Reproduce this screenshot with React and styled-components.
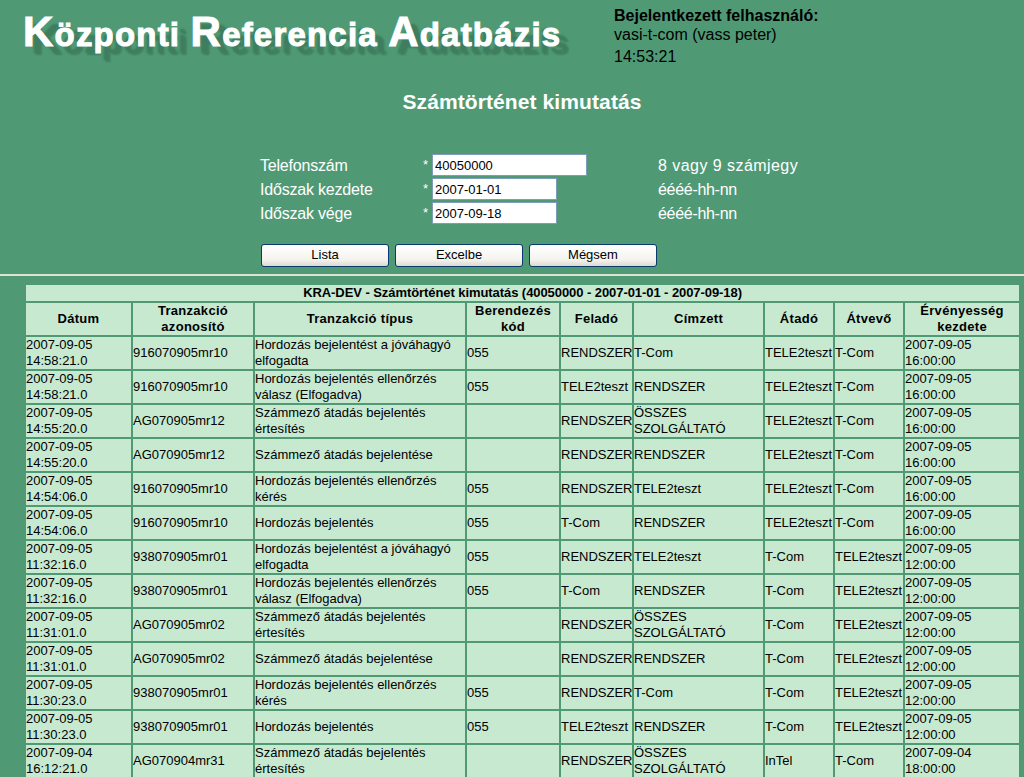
import React from "react";
import styled, { createGlobalStyle } from "styled-components";

const GlobalStyle = createGlobalStyle`
  html, body {
    margin: 0;
    padding: 0;
    height: 777px;
    overflow: hidden;
    background-color: #4f9a75;
    font-family: "Liberation Sans", Arial, sans-serif;
  }
`;

const Page = styled.div`
  width: 1024px;
  height: 777px;
  overflow: hidden;
`;

const Header = styled.div`
  display: flex;
  height: 70px;
`;

const LogoBox = styled.div`
  width: 614px;
  padding: 12px 0 0 23px;
  box-sizing: border-box;
`;

const Logo = styled.div`
  font-size: 33px;
  line-height: 40px;
  font-weight: bold;
  color: #fff;
  white-space: nowrap;
  letter-spacing: 1.2px;
  -webkit-text-stroke: 1px #fff;
  text-shadow: 8px 7px 2px #3f7d5f, 10px 9px 2px #41805f;

  span {
    font-size: 42px;
  }
`;

const UserInfo = styled.div`
  padding-top: 7px;
  font-size: 16px;
  line-height: 20px;
  color: #000;

  div {
    margin-bottom: 2px;
  }

  b {
    display: block;
    line-height: 18px;
  }
`;

const Title = styled.h1`
  margin: 20px 0 0;
  height: 63px;
  padding-left: 20px;
  font-size: 21px;
  line-height: 24px;
  font-weight: bold;
  letter-spacing: 0.1px;
  color: #fff;
  text-align: center;
`;

const Form = styled.div`
  display: grid;
  grid-template-columns: 163px 9px 226px auto;
  grid-auto-rows: 24px;
  margin-left: 260px;
  align-items: center;
  color: #fff;
  font-size: 16px;
`;

const Label = styled.span`
  padding-top: 1px;
  letter-spacing: -0.2px;
`;

const Star = styled.span`
  font-size: 13px;
  align-self: start;
  padding-top: 4px;
`;

const Hint = styled.span`
  padding-top: 1px;
  white-space: nowrap;
  letter-spacing: ${(p) => p.$track}px;
`;

const Input = styled.input`
  box-sizing: border-box;
  display: block;
  width: ${(p) => p.$width}px;
  height: 22px;
  margin: 0;
  padding: 1px 2px;
  border: 1px solid #7f9db9;
  border-radius: 0;
  outline: none;
  background: #fff;
  color: #000;
  font-family: "Liberation Sans", Arial, sans-serif;
  font-size: 13px;
`;

const Buttons = styled.div`
  display: flex;
  gap: 6px;
  margin: 19px 0 0 261px;
`;

const Button = styled.button`
  box-sizing: border-box;
  width: 128px;
  height: 23px;
  padding: 0 0 2px;
  border: 1px solid #0a3a6b;
  border-radius: 3px;
  background: linear-gradient(#ffffff, #f4f3ee 70%, #dcd9cf);
  color: #000;
  font-family: "Liberation Sans", Arial, sans-serif;
  font-size: 13px;
`;

const Rule = styled.hr`
  margin: 7px 0 0;
  height: 2px;
  border: 0;
  background: #dfe3d3;
`;

const TableWrap = styled.div`
  margin: 7px 0 0 24px;
`;

const Table = styled.table`
  table-layout: fixed;
  width: 997px;
  border-collapse: separate;
  border-spacing: 2px;
  color: #000;
  font-size: 13px;
  line-height: 16px;
`;

const Caption = styled.th`
  height: 16px;
  padding: 0;
  background: #c6e9d0;
  font-size: 13px;
  line-height: 16px;
  font-weight: bold;
  letter-spacing: -0.07px;
  text-align: center;
`;

const HeadCell = styled.th`
  height: 32px;
  padding: 0;
  background: #c6e9d0;
  font-weight: bold;
  letter-spacing: 0.3px;
  text-align: center;
  vertical-align: middle;
`;

const Cell = styled.td`
  height: 32px;
  padding: 0;
  background: #c6e9d0;
  text-align: left;
  vertical-align: middle;
  white-space: ${(p) => (p.$nowrap ? "nowrap" : "normal")};
  overflow: hidden;
`;

const COLS = [105, 120, 210, 92, 71, 129, 68, 68, 114];

const HEADS = [
  ["Dátum"],
  ["Tranzakció", "azonosító"],
  ["Tranzakció típus"],
  ["Berendezés", "kód"],
  ["Feladó"],
  ["Címzett"],
  ["Átadó"],
  ["Átvevő"],
  ["Érvényesség", "kezdete"],
];

const JOVA = ["Hordozás bejelentést a jóváhagyó", "elfogadta"];
const VALASZ = ["Hordozás bejelentés ellenőrzés", "válasz (Elfogadva)"];
const KERES = ["Hordozás bejelentés ellenőrzés", "kérés"];
const ATADAS = ["Számmező átadás bejelentés", "értesítés"];
const ALL = ["ÖSSZES", "SZOLGÁLTATÓ"];

const ROWS = [
  ["2007-09-05", "14:58:21.0", "916070905mr10", JOVA, "055", "RENDSZER", "T-Com", "TELE2teszt", "T-Com", "16:00:00", "2007-09-05"],
  ["2007-09-05", "14:58:21.0", "916070905mr10", VALASZ, "055", "TELE2teszt", "RENDSZER", "TELE2teszt", "T-Com", "16:00:00", "2007-09-05"],
  ["2007-09-05", "14:55:20.0", "AG070905mr12", ATADAS, "", "RENDSZER", ALL, "TELE2teszt", "T-Com", "16:00:00", "2007-09-05"],
  ["2007-09-05", "14:55:20.0", "AG070905mr12", ["Számmező átadás bejelentése"], "", "RENDSZER", "RENDSZER", "TELE2teszt", "T-Com", "16:00:00", "2007-09-05"],
  ["2007-09-05", "14:54:06.0", "916070905mr10", KERES, "055", "RENDSZER", "TELE2teszt", "TELE2teszt", "T-Com", "16:00:00", "2007-09-05"],
  ["2007-09-05", "14:54:06.0", "916070905mr10", ["Hordozás bejelentés"], "055", "T-Com", "RENDSZER", "TELE2teszt", "T-Com", "16:00:00", "2007-09-05"],
  ["2007-09-05", "11:32:16.0", "938070905mr01", JOVA, "055", "RENDSZER", "TELE2teszt", "T-Com", "TELE2teszt", "12:00:00", "2007-09-05"],
  ["2007-09-05", "11:32:16.0", "938070905mr01", VALASZ, "055", "T-Com", "RENDSZER", "T-Com", "TELE2teszt", "12:00:00", "2007-09-05"],
  ["2007-09-05", "11:31:01.0", "AG070905mr02", ATADAS, "", "RENDSZER", ALL, "T-Com", "TELE2teszt", "12:00:00", "2007-09-05"],
  ["2007-09-05", "11:31:01.0", "AG070905mr02", ["Számmező átadás bejelentése"], "", "RENDSZER", "RENDSZER", "T-Com", "TELE2teszt", "12:00:00", "2007-09-05"],
  ["2007-09-05", "11:30:23.0", "938070905mr01", KERES, "055", "RENDSZER", "T-Com", "T-Com", "TELE2teszt", "12:00:00", "2007-09-05"],
  ["2007-09-05", "11:30:23.0", "938070905mr01", ["Hordozás bejelentés"], "055", "TELE2teszt", "RENDSZER", "T-Com", "TELE2teszt", "12:00:00", "2007-09-05"],
  ["2007-09-04", "16:12:21.0", "AG070904mr31", ATADAS, "", "RENDSZER", ALL, "InTel", "T-Com", "18:00:00", "2007-09-04"],
];

const Lines = ({ items }) =>
  items.map((line, i) => (
    <React.Fragment key={line}>
      {i > 0 && <br />}
      {line}
    </React.Fragment>
  ));

const toLines = (value) => (Array.isArray(value) ? value : [value]);

const App = () => (
  <Page>
    <GlobalStyle />
    <Header>
      <LogoBox>
        <Logo>
          <span>K</span>özponti <span>R</span>eferencia <span>A</span>datbázis
        </Logo>
      </LogoBox>
      <UserInfo>
        <b>Bejelentkezett felhasználó:</b>
        <div>vasi-t-com (vass peter)</div>
        <div>14:53:21</div>
      </UserInfo>
    </Header>

    <Title>Számtörténet kimutatás</Title>

    <Form>
      <Label>Telefonszám</Label>
      <Star>*</Star>
      <span><Input $width={155} defaultValue="40050000" /></span>
      <Hint $track={0.45}>8 vagy 9 számjegy</Hint>
      <Label>Időszak kezdete</Label>
      <Star>*</Star>
      <span><Input $width={125} defaultValue="2007-01-01" /></span>
      <Hint $track={-0.3}>éééé-hh-nn</Hint>
      <Label>Időszak vége</Label>
      <Star>*</Star>
      <span><Input $width={125} defaultValue="2007-09-18" /></span>
      <Hint $track={-0.3}>éééé-hh-nn</Hint>
    </Form>

    <Buttons>
      <Button>Lista</Button>
      <Button>Excelbe</Button>
      <Button>Mégsem</Button>
    </Buttons>

    <Rule />

    <TableWrap>
      <Table>
        <colgroup>
          {COLS.map((w, i) => (
            <col key={i} style={{ width: w }} />
          ))}
        </colgroup>
        <thead>
          <tr>
            <Caption colSpan={9}>
              KRA-DEV - Számtörténet kimutatás (40050000 - 2007-01-01 - 2007-09-18)
            </Caption>
          </tr>
          <tr>
            {HEADS.map((h) => (
              <HeadCell key={h[0]}>
                <Lines items={h} />
              </HeadCell>
            ))}
          </tr>
        </thead>
        <tbody>
          {ROWS.map((r, i) => (
            <tr key={i}>
              <Cell><Lines items={[r[0], r[1]]} /></Cell>
              <Cell $nowrap>{r[2]}</Cell>
              <Cell><Lines items={r[3]} /></Cell>
              <Cell>{r[4]}</Cell>
              <Cell $nowrap>{r[5]}</Cell>
              <Cell $nowrap><Lines items={toLines(r[6])} /></Cell>
              <Cell $nowrap>{r[7]}</Cell>
              <Cell $nowrap>{r[8]}</Cell>
              <Cell><Lines items={[r[10], r[9]]} /></Cell>
            </tr>
          ))}
        </tbody>
      </Table>
    </TableWrap>
  </Page>
);

export default App;
